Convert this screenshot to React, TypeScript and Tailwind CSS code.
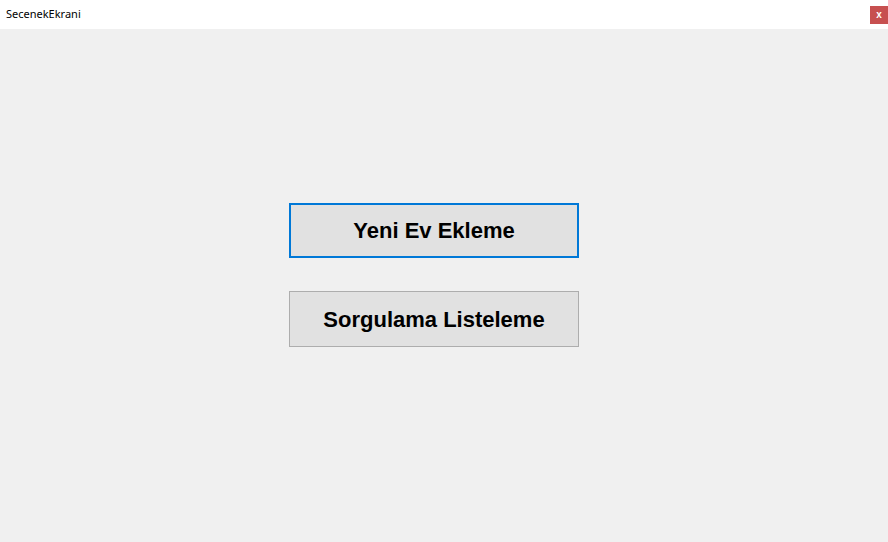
import React from 'react';

const App: React.FC = () => {
  return (
    <div className="w-[888px] h-[542px] flex flex-col bg-[#f0f0f0]" style={{ fontFamily: '"Liberation Sans", Arial, sans-serif' }}>
      <header className="h-[29px] bg-white flex items-start justify-between pl-[6px] pt-[6px]">
        <span className="text-[11px] leading-[15px] text-black" style={{ fontFamily: '"Noto Sans", "Open Sans", sans-serif' }}>SecenekEkrani</span>
        <button className="w-[18px] h-[18px] bg-[#c75050] text-white text-[10px] font-bold leading-none flex items-center justify-center">x</button>
      </header>

      <main className="flex flex-col pl-[289px] pt-[174px] gap-[33px]">
        <button className="w-[290px] h-[55px] bg-[#e1e1e1] border-2 border-[#0078d7] text-[22px] font-bold text-black">Yeni Ev Ekleme</button>
        <button className="w-[290px] h-[56px] bg-[#e1e1e1] border border-[#adadad] text-[22px] font-bold text-black">Sorgulama Listeleme</button>
      </main>
    </div>
  );
};

export default App;
